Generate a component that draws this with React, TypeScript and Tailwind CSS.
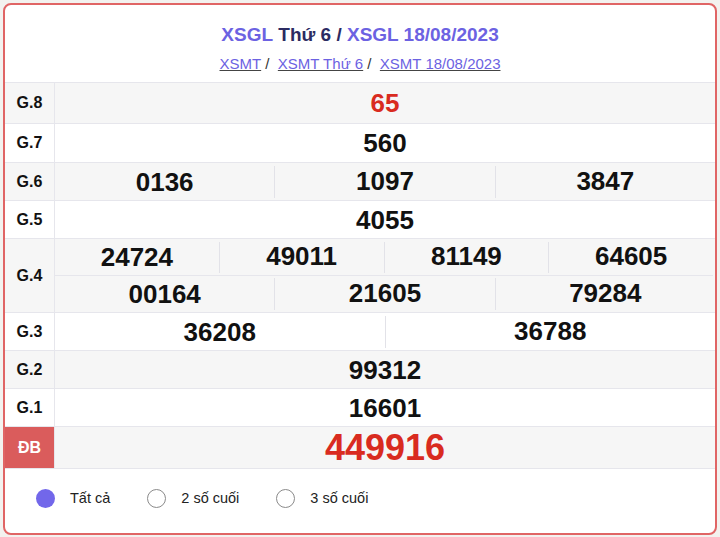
import React from "react";

const font = { fontFamily: '"Liberation Sans", Arial, Helvetica, sans-serif' };

type Row = {
  label: string;
  lines: string[][];
  h: number;
  gray: boolean;
  red?: boolean;
  big?: boolean;
  special?: boolean;
};

const rows: Row[] = [
  { label: "G.8", lines: [["65"]], h: 41, gray: true, red: true },
  { label: "G.7", lines: [["560"]], h: 39, gray: false },
  { label: "G.6", lines: [["0136", "1097", "3847"]], h: 38, gray: true },
  { label: "G.5", lines: [["4055"]], h: 38, gray: false },
  {
    label: "G.4",
    lines: [
      ["24724", "49011", "81149", "64605"],
      ["00164", "21605", "79284"],
    ],
    h: 74,
    gray: true,
  },
  { label: "G.3", lines: [["36208", "36788"]], h: 38, gray: false },
  { label: "G.2", lines: [["99312"]], h: 38, gray: true },
  { label: "G.1", lines: [["16601"]], h: 38, gray: false },
  { label: "ĐB", lines: [["449916"]], h: 42, gray: true, red: true, big: true, special: true },
];

function Line({ nums, row, last, first }: { nums: string[]; row: Row; last: boolean; first: boolean }) {
  return (
    <div className={`flex flex-1 ${!last ? "border-b border-[#e6e6ec] mr-[2px]" : ""}`}>
      {nums.map((n, i) => (
        <div
          key={i}
          className={`flex-1 flex items-center justify-center ${
            i > 0 ? "border-l border-[#e2e2e8] " + (first ? "mt-[3px]" : "mt-[2px]") + " mb-[2px]" : ""
          }`}
        >
          <span
            className={`font-bold leading-none ${row.big ? "text-[36px]" : "text-[26px]"} ${
              row.red ? "text-[#d92b1f]" : "text-[#111111]"
            } ${i > 0 ? (first ? "-mt-[3px]" : "-mt-[2px]") : ""}`}
          >
            {n}
          </span>
        </div>
      ))}
    </div>
  );
}

function Radio({ checked, label }: { checked: boolean; label: string }) {
  return (
    <div className="flex items-center gap-[15px]">
      <span
        className={`block w-[19px] h-[19px] rounded-full ${
          checked ? "bg-[#7267ea]" : "bg-white border border-[#8a8a8a]"
        }`}
      />
      <span className="text-[14.5px] text-[#222222] leading-none">{label}</span>
    </div>
  );
}

export default function App() {
  return (
    <div className="w-[720px] h-[537px] bg-[#f3f2ef] pt-[3px] pl-[3px] pr-[3px]" style={font}>
      <div className="w-[714px] h-[532px] border-2 border-[#e06565] rounded-[8px] bg-white overflow-hidden flex flex-col">
        <div className="flex flex-col items-center pt-[18px] pb-[8px]">
          <div className="h-[24px] flex items-center text-[19px] font-bold">
            <span className="text-[#6c62e2]">XSGL</span>
            <span className="text-[#2c2b62]">&nbsp;Thứ 6 /&nbsp;</span>
            <span className="text-[#6c62e2]">XSGL 18/08/2023</span>
          </div>
          <div className="mt-[7px] h-[20px] flex items-center text-[15px] text-[#333333]">
            <span className="text-[#6c62e2] underline decoration-[#444444]">XSMT </span>
            <span>&nbsp;/&nbsp;&nbsp;</span>
            <span className="text-[#6c62e2] underline decoration-[#444444]">XSMT Thứ 6 </span>
            <span>&nbsp;/&nbsp;&nbsp;</span>
            <span className="text-[#6c62e2] underline decoration-[#444444]">XSMT 18/08/2023</span>
          </div>
        </div>

        <div className="border-t border-[#e6e6ec]">
          {rows.map((r, idx) => (
            <div
              key={idx}
              className={`flex border-b border-[#e6e6ec] ${r.gray ? "bg-[#f6f6f6]" : "bg-white"}`}
              style={{ height: r.h }}
            >
              <div
                className={`w-[50px] shrink-0 border-r border-[#e6e6ec] flex items-center justify-center text-[16px] font-bold ${
                  r.special ? "bg-[#da5c5c] text-white" : "text-[#111111]"
                }`}
              >
                {r.label}
              </div>
              <div className="flex-1 flex flex-col">
                {r.lines.map((l, li) => (
                  <Line key={li} nums={l} row={r} last={li === r.lines.length - 1} first={li === 0} />
                ))}
              </div>
            </div>
          ))}
        </div>

        <div className="flex-1 flex items-center pl-[31px] pb-[5px] gap-[37px]">
          <Radio checked label="Tất cả" />
          <Radio checked={false} label="2 số cuối" />
          <Radio checked={false} label="3 số cuối" />
        </div>
      </div>
    </div>
  );
}
